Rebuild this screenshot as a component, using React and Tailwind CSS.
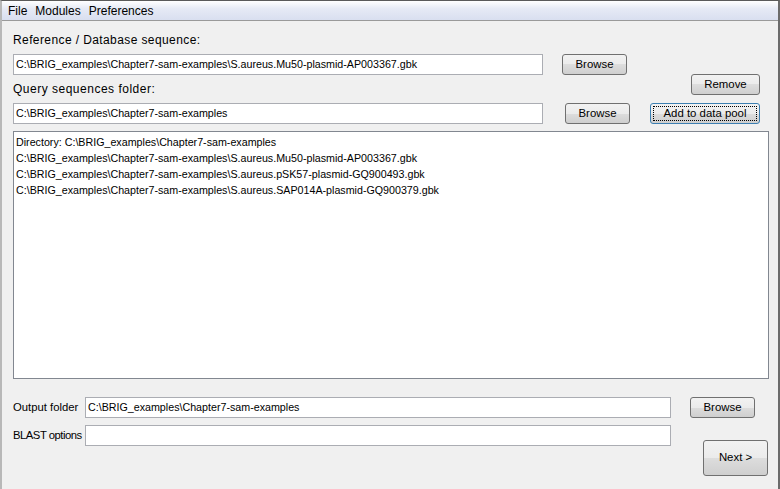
import React from 'react';

const FONT = { fontFamily: '"Liberation Sans", Arial, sans-serif' };

function Button({ children, className = '', focused = false }) {
  return (
    <div
      className={`flex items-center justify-center rounded-[3px] border bg-[linear-gradient(#f2f2f2_0%,#ebebeb_50%,#dddddd_50%,#cfcfcf_100%)] text-[11.4px] text-black ${
        focused ? 'border-[#3c7fb1]' : 'border-[#707070]'
      } ${className}`}
    >
      {focused ? (
        <span className="flex h-[calc(100%-4px)] w-[calc(100%-4px)] items-center justify-center border border-dotted border-black">
          {children}
        </span>
      ) : (
        children
      )}
    </div>
  );
}

function Input({ value = '', className = '' }) {
  return (
    <div className={`flex h-[21px] items-center whitespace-nowrap border border-[#abadb3] bg-white pl-[2px] text-[10.7px] text-black ${className}`}>
      {value}
    </div>
  );
}

const FILES = [
  'Directory: C:\\BRIG_examples\\Chapter7-sam-examples',
  'C:\\BRIG_examples\\Chapter7-sam-examples\\S.aureus.Mu50-plasmid-AP003367.gbk',
  'C:\\BRIG_examples\\Chapter7-sam-examples\\S.aureus.pSK57-plasmid-GQ900493.gbk',
  'C:\\BRIG_examples\\Chapter7-sam-examples\\S.aureus.SAP014A-plasmid-GQ900379.gbk',
];

export default function App() {
  return (
    <div
      className="flex h-[489px] w-[780px] flex-col overflow-hidden border-t border-r-2 border-l-2 border-t-[#5a5a5a] border-r-[#6b6b6b] border-l-[#b8b8b8] bg-[#f0f0f0] text-[12px] text-black"
      style={FONT}
    >
      {/* Menu bar */}
      <div className="flex h-[20px] shrink-0 items-center gap-[8px] border-b border-[#9a9a9a] bg-[linear-gradient(#ffffff_0%,#e6eaf5_40%,#d9dff0_100%)] pl-[6px]">
        <span>File</span>
        <span>Modules</span>
        <span>Preferences</span>
      </div>

      <div className="flex flex-col pl-[11px]">
        <div className="mt-[12px] h-[14px] leading-[14px] tracking-[0.4px]">Reference / Database sequence:</div>

        <div className="mt-[7px] flex items-start">
          <Input className="w-[530px]" value="C:\BRIG_examples\Chapter7-sam-examples\S.aureus.Mu50-plasmid-AP003367.gbk" />
          <Button className="ml-[19px] h-[21px] w-[65px]">Browse</Button>
        </div>

        <div className="flex h-[28px] items-start justify-between">
          <div className="mt-[7px] leading-[14px] tracking-[0.5px]">Query sequences folder:</div>
          <Button className="mr-[18px] -mt-[1px] h-[21px] w-[69px]">Remove</Button>
        </div>

        <div className="flex items-start">
          <Input className="w-[530px]" value="C:\BRIG_examples\Chapter7-sam-examples" />
          <Button className="ml-[22px] h-[21px] w-[65px]">Browse</Button>
          <Button focused className="ml-[20px] h-[21px] w-[110px]">Add to data pool</Button>
        </div>

        {/* List box */}
        <div className="mt-[7px] flex h-[248px] w-[756px] flex-col border border-[#828790] bg-white pt-[2px] pl-[2px] text-[10.7px]">
          {FILES.map((f) => (
            <div key={f} className="h-[16px] whitespace-nowrap leading-[16px]">{f}</div>
          ))}
        </div>

        <div className="mt-[18px] flex">
          <div className="flex w-[677px] flex-col gap-[7px]">
            <div className="flex items-center">
              <span className="w-[72px] shrink-0 whitespace-nowrap text-[11.3px]">Output folder</span>
              <Input className="w-[586px]" value="C:\BRIG_examples\Chapter7-sam-examples" />
            </div>
            <div className="flex items-center">
              <span className="w-[72px] shrink-0 whitespace-nowrap text-[11.3px] tracking-[-0.5px]">BLAST options</span>
              <Input className="w-[586px]" />
            </div>
          </div>
          <div className="flex flex-col">
            <Button className="h-[21px] w-[65px]">Browse</Button>
            <Button className="mt-[22px] ml-[13px] h-[36px] w-[65px]">Next &gt;</Button>
          </div>
        </div>
      </div>
    </div>
  );
}
